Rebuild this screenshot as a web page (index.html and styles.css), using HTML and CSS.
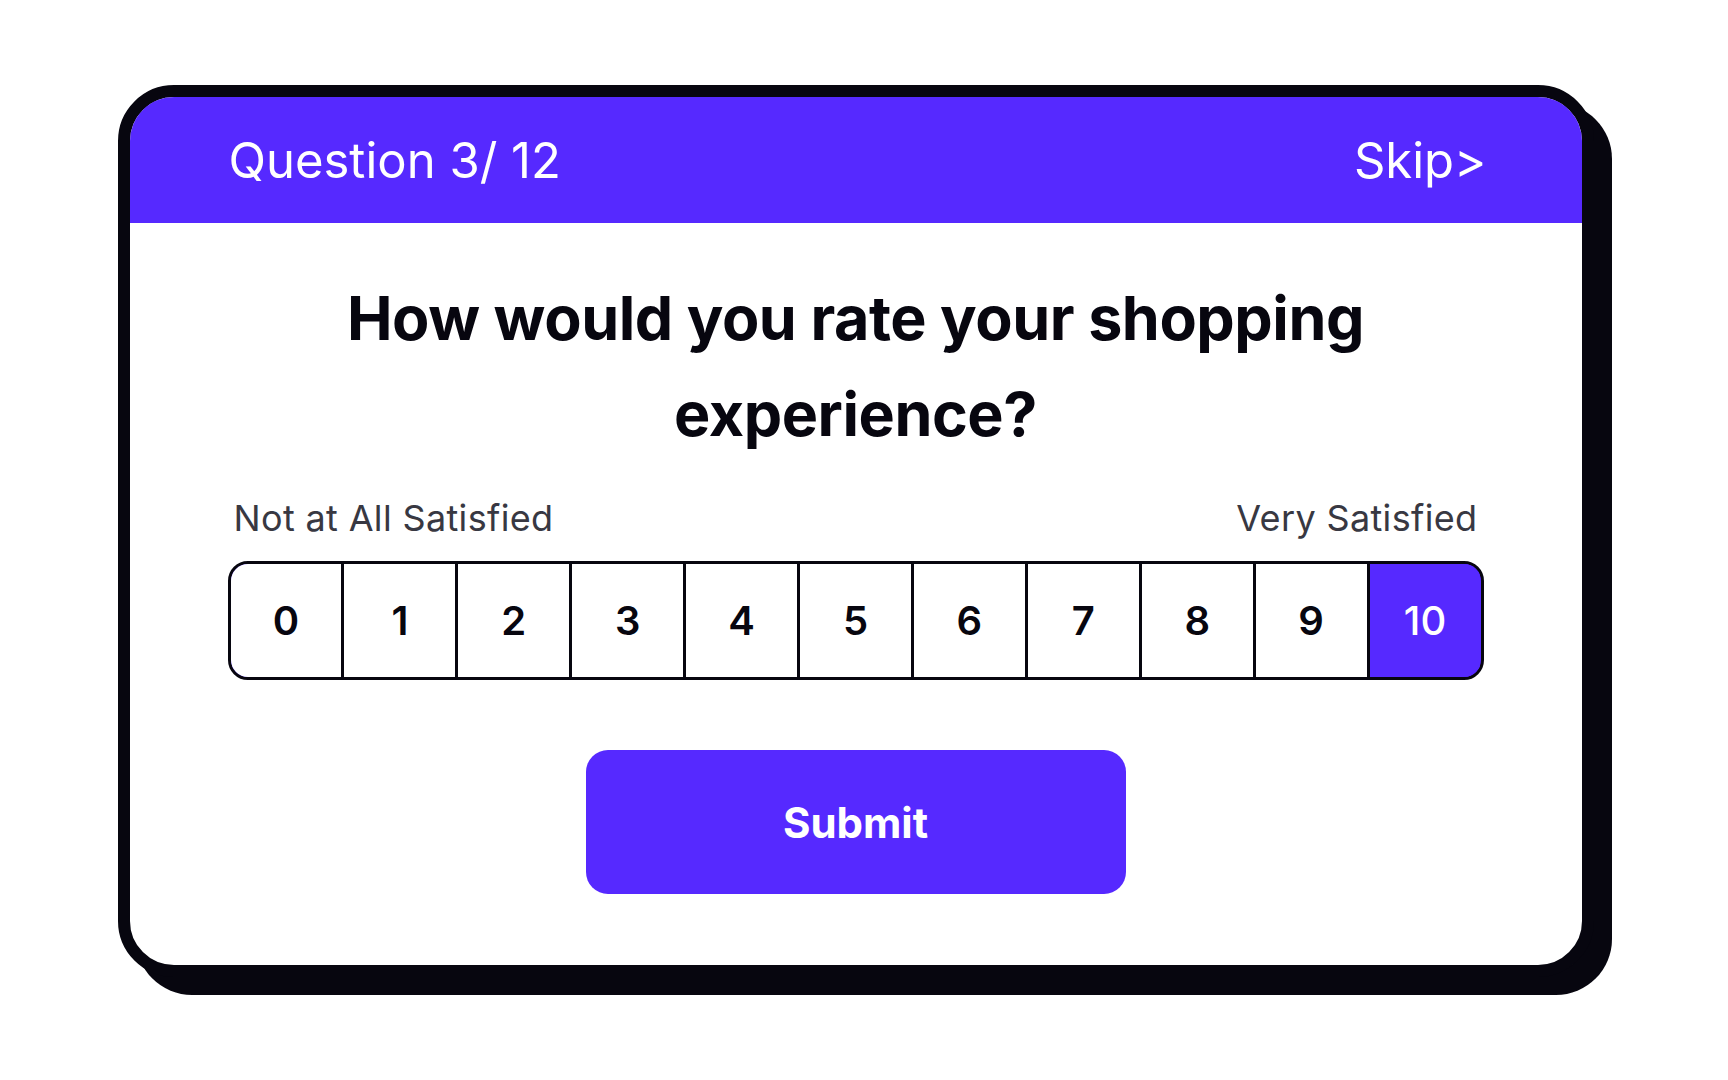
FILE: index.html
```html
<!DOCTYPE html>
<html lang="en">
<head>
<meta charset="utf-8">
<title>Survey</title>
<link rel="stylesheet" href="styles.css">
</head>
<body>
<main class="card">
  <header class="card-header">
    <span class="progress">Question 3/ 12</span>
    <span class="skip">Skip&gt;</span>
  </header>
  <section class="card-body">
    <h1 class="question">How would you rate your shopping<br>experience?</h1>
    <div class="labels">
      <span>Not at All Satisfied</span>
      <span>Very Satisfied</span>
    </div>
    <div class="scale">
      <div class="cell">0</div>
      <div class="cell">1</div>
      <div class="cell">2</div>
      <div class="cell">3</div>
      <div class="cell">4</div>
      <div class="cell">5</div>
      <div class="cell">6</div>
      <div class="cell">7</div>
      <div class="cell">8</div>
      <div class="cell">9</div>
      <div class="cell selected">10</div>
    </div>
    <button class="submit" type="button">Submit</button>
  </section>
</main>
</body>
</html>
```

FILE: styles.css
```css
* {
  box-sizing: border-box;
}

html, body {
  margin: 0;
  padding: 0;
}

body {
  width: 1728px;
  height: 1080px;
  background: #ffffff;
  font-family: Inter, "Noto Sans", sans-serif;
  display: flex;
  align-items: center;
  justify-content: center;
}

.card {
  width: 1476px;
  margin: 0 17px 18px 0;
  border: 12px solid #07060f;
  border-radius: 56px;
  background: #ffffff;
  box-shadow: 18px 18px 0 0 #07060f;
  overflow: hidden;
  display: flex;
  flex-direction: column;
}

.card-header {
  height: 126px;
  background: #5629ff;
  color: #ffffff;
  display: flex;
  align-items: center;
  justify-content: space-between;
  padding: 0 95px 0 99px;
  font-size: 49px;
  font-weight: 400;
}

.card-body {
  padding: 47px 98px 71px;
  display: flex;
  flex-direction: column;
  align-items: center;
}

.question {
  margin: 0;
  font-size: 61px;
  line-height: 96px;
  font-weight: 700;
  color: #07060f;
  text-align: center;
  letter-spacing: -0.45px;
}

.labels {
  margin-top: 36px;
  width: 100%;
  display: flex;
  justify-content: space-between;
  padding: 0 6px 0 6px;
  font-size: 36px;
  line-height: 40px;
  letter-spacing: 0.35px;
  color: #383842;
}

.scale {
  margin-top: 23px;
  width: 1256px;
  height: 119px;
  display: flex;
  border: 3px solid #07060f;
  border-radius: 20px;
  background: #5629ff;
  overflow: hidden;
}

.cell {
  flex: 1 1 0;
  display: flex;
  align-items: center;
  justify-content: center;
  font-size: 40px;
  font-weight: 600;
  color: #07060f;
  background: #ffffff;
}

.cell + .cell {
  border-left: 3px solid #07060f;
}

.cell.selected {
  background: #5629ff;
  color: #ffffff;
  font-weight: 500;
}

.submit {
  margin-top: 70px;
  width: 540px;
  height: 144px;
  border: none;
  border-radius: 22px;
  background: #5629ff;
  color: #ffffff;
  font-family: Inter, "Noto Sans", sans-serif;
  font-size: 42px;
  font-weight: 700;
  cursor: pointer;
}
```
